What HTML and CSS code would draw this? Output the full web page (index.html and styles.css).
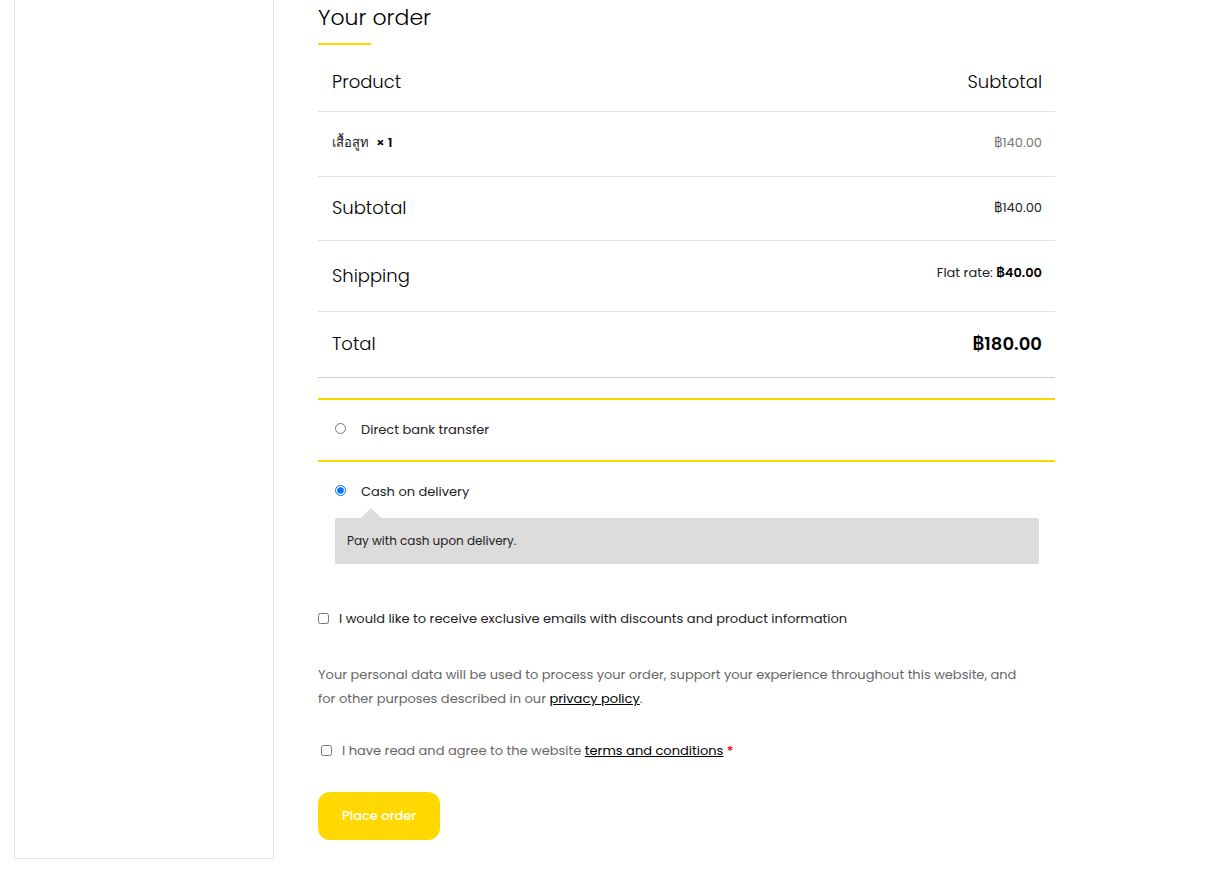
FILE: index.html
```html
<!DOCTYPE html>
<html lang="en">
<head>
<meta charset="utf-8">
<meta name="viewport" content="width=device-width, initial-scale=1">
<title>Checkout</title>
<link rel="stylesheet" href="styles.css">
</head>
<body>
<div class="checkout">
  <aside class="side-panel"></aside>
  <main class="order">
    <h1 class="order-title">Your order</h1>
    <table class="review">
      <thead>
        <tr class="row-head"><th scope="col">Product</th><th scope="col" class="value">Subtotal</th></tr>
      </thead>
      <tbody>
        <tr class="row-item"><td class="item"><span lang="th">เสื้อสูท</span>&nbsp; <strong>× 1</strong></td><td class="value muted">฿140.00</td></tr>
      </tbody>
      <tfoot>
        <tr class="row-subtotal"><th scope="row">Subtotal</th><td class="value">฿140.00</td></tr>
        <tr class="row-shipping"><th scope="row">Shipping</th><td class="value">Flat rate: <strong>฿40.00</strong></td></tr>
        <tr class="row-total"><th scope="row">Total</th><td class="value total">฿180.00</td></tr>
      </tfoot>
    </table>

    <form class="payment">
      <ul class="methods">
        <li class="method">
          <div class="choice"><input class="tick" type="radio" name="method" id="bank"><label for="bank">Direct bank transfer</label></div>
        </li>
        <li class="method">
          <div class="choice"><input class="tick" type="radio" name="method" id="cod" checked><label for="cod">Cash on delivery</label></div>
          <div class="method-note">Pay with cash upon delivery.</div>
        </li>
      </ul>
      <div class="optin"><input class="tick" type="checkbox" id="emails"><label for="emails">I would like to receive exclusive emails with discounts and product information</label></div>
      <p class="privacy">Your personal data will be used to process your order, support your experience throughout this website, and for other purposes described in our <a href="#privacy">privacy policy</a>.</p>
      <div class="terms"><input class="tick" type="checkbox" id="terms"><label for="terms">I have read and agree to the website <a href="#terms">terms and conditions</a> <span class="required">*</span></label></div>
      <button class="place-order" type="button">Place order</button>
    </form>
  </main>
</div>
</body>
</html>
```
FILE: styles.css
```css
* { box-sizing: border-box; }

body {
  margin: 0;
  background: #fff;
  color: #222;
  font-family: Poppins, Inter, "Noto Sans", sans-serif;
  font-size: 13px;
  font-weight: 400;
  line-height: 24px;
}

.checkout {
  display: grid;
  grid-template-columns: 260px minmax(0, 1fr);
  gap: 44px;
  padding: 0 153px 11px 14px;
}

.side-panel {
  border: 1px solid #e5e5e5;
  border-top: 0;
}

.order { padding-bottom: 19px; }

.order-title {
  width: fit-content;
  margin: 0 0 8px;
  color: #000;
  font-size: 22px;
  font-weight: 300;
  line-height: 36px;
}

.order-title::after {
  content: "";
  display: block;
  width: 53px;
  height: 2px;
  margin-top: 7px;
  background: #ffd800;
}

.review {
  width: 100%;
  border-collapse: separate;
  border-spacing: 0;
}

.review th,
.review td {
  padding: 0 13px 0 14px;
  border-bottom: 1px solid #e2e2e2;
  text-align: left;
  vertical-align: middle;
}

.review th {
  color: #000;
  font-size: 18px;
  font-weight: 300;
}

.review .value { text-align: right; }
.review .muted { color: #777; }
.review .total { color: #000; font-size: 18px; font-weight: 600; }
.review strong { color: #000; font-weight: 600; }

.row-head { height: 59px; }
.row-item { height: 65px; }
.row-subtotal { height: 64px; }
.row-shipping { height: 71px; }
.row-total { height: 66px; }

.review .row-item td { padding-bottom: 3px; }
.review .row-subtotal th,
.review .row-subtotal td { padding-bottom: 2px; }
.review .row-shipping td { padding-bottom: 6px; }
.review .row-total th,
.review .row-total td { padding-bottom: 2px; border-bottom-color: #ccc; }

.methods {
  margin: 20px 0 0;
  padding: 0;
  list-style: none;
}

.method {
  padding: 18px 16px;
  border-top: 2px solid #ffd800;
}

.tick {
  flex: none;
  width: 11px;
  height: 11px;
  margin: 6px 0 0;
}

.choice,
.optin,
.terms {
  display: flex;
  align-items: flex-start;
  gap: 10px;
}

.choice { gap: 15px; padding-left: 1px; }
.choice .tick { margin-top: 5px; }

.method-note {
  position: relative;
  margin: 14px 0 0 1px;
  padding: 11px 12px;
  border-radius: 2px;
  background: #dedbdc;
  font-size: 12px;
}

.method-note::before {
  content: "";
  position: absolute;
  bottom: 100%;
  left: 26px;
  border: 10px solid transparent;
  border-top: 0;
  border-bottom-color: #dedbdc;
}

.optin { margin-top: 25px; }

.privacy {
  margin: 32px 0 28px;
  padding-right: 20px;
  color: #666;
}

.order a {
  color: #000;
  text-decoration: underline;
}

.terms { padding-left: 3px; color: #666; }
.required { color: #f00; font-weight: 600; }

.place-order {
  display: block;
  margin-top: 29px;
  padding: 12px 24px;
  border: 0;
  border-radius: 12px;
  background: #ffd800;
  color: #fff;
  font: inherit;
  font-weight: 500;
  cursor: pointer;
}
```
